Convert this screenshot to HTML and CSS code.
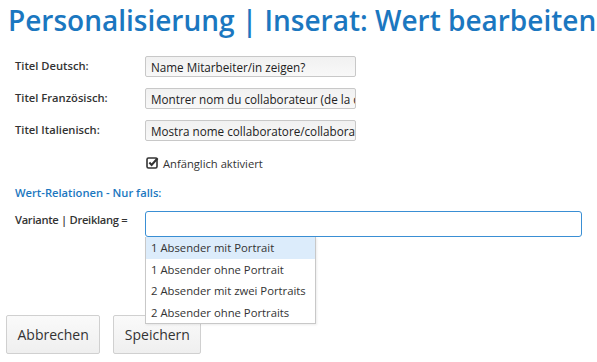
FILE: index.html
```html
<!DOCTYPE html>
<html lang="de">
<head>
<meta charset="utf-8">
<title>Personalisierung</title>
<link rel="stylesheet" href="styles.css">
</head>
<body>
<h1 class="title">Personalisierung | Inserat: Wert bearbeiten</h1>
<form class="form">
  <div class="row">
    <label class="label">Titel Deutsch:</label>
    <input class="text" type="text" value="Name Mitarbeiter/in zeigen?">
  </div>
  <div class="row">
    <label class="label">Titel Französisch:</label>
    <input class="text" type="text" value="Montrer nom du collaborateur (de la collaboratrice)?">
  </div>
  <div class="row">
    <label class="label">Titel Italienisch:</label>
    <input class="text" type="text" value="Mostra nome collaboratore/collaboratrice?">
  </div>
  <div class="row check-row">
    <span class="check-box">
      <svg width="13" height="13" viewBox="0 0 13 13">
        <rect x="1" y="2" width="10" height="10" rx="1.5" fill="none" stroke="#333" stroke-width="1.6"/>
        <path d="M3.4 6.6 L5.6 8.9 L11.6 2.2" fill="none" stroke="#333" stroke-width="2.1"/>
      </svg>
    </span>
    <span class="check-text">Anfänglich aktiviert</span>
  </div>
  <div class="section">Wert-Relationen - Nur falls:</div>
  <div class="row relation-row">
    <label class="label rel-label">Variante | Dreiklang =</label>
    <div class="combo">
      <input class="text wide" type="text" value="">
      <ul class="menu">
        <li class="item active">1 Absender mit Portrait</li>
        <li class="item">1 Absender ohne Portrait</li>
        <li class="item">2 Absender mit zwei Portraits</li>
        <li class="item">2 Absender ohne Portraits</li>
      </ul>
    </div>
  </div>
  <div class="buttons">
    <button type="button" class="btn">Abbrechen</button>
    <button type="button" class="btn">Speichern</button>
  </div>
</form>
</body>
</html>
```
FILE: styles.css
```css
html, body {
  margin: 0;
  padding: 0;
  background: #fff;
}
body {
  font-family: "Open Sans", "DejaVu Sans", sans-serif;
  color: #333;
  width: 597px;
  height: 362px;
  overflow: hidden;
}
.title {
  margin: 0;
  padding: 0 0 0 8px;
  font-size: 28px;
  line-height: 40px;
  font-weight: 600;
  color: #1b77c0;
  white-space: nowrap;
}
.form {
  padding: 16px 0 0 15px;
}
.row {
  display: grid;
  grid-template-columns: 130px auto;
  align-items: start;
  margin-bottom: 11px;
}
.label {
  font-size: 11.2px;
  font-weight: 600;
  line-height: 20px;
  color: #333;
}
.rel-label {
  letter-spacing: -0.3px;
}
.text {
  box-sizing: border-box;
  width: 211px;
  height: 21px;
  margin: 0;
  padding: 0 0 0 5px;
  border: 1px solid #c8c8c8;
  border-radius: 2px;
  background: linear-gradient(#f1f1f1, #f8f8f8);
  font-family: inherit;
  font-size: 11.7px;
  color: #222;
  outline: none;
}
.check-row {
  display: flex;
  align-items: center;
  padding-left: 131px;
  margin-top: 2px;
  margin-bottom: 0;
  height: 22px;
}
.check-box {
  display: inline-flex;
  width: 14px;
  height: 14px;
  margin-right: 3px;
}
.check-text {
  font-size: 11.2px;
}
.section {
  margin-top: 10px;
  font-size: 11.2px;
  line-height: 18px;
  font-weight: 600;
  color: #1b77c0;
}
.relation-row {
  margin-top: 9px;
  margin-bottom: 0;
}
.relation-row .label {
  line-height: 18px;
}
.combo {
  position: relative;
}
.text.wide {
  width: 437px;
  height: 26px;
  border: 1px solid #3a8fd4;
  border-radius: 3px;
  background: #fff;
}
.menu {
  position: absolute;
  left: 0;
  top: 26px;
  box-sizing: border-box;
  width: 171px;
  margin: 0;
  padding: 0;
  list-style: none;
  background: #fff;
  border: 1px solid #c8c8c8;
  border-top: 0;
  box-shadow: 1px 1px 2px rgba(0,0,0,0.08);
  z-index: 2;
}
.item {
  font-size: 11.3px;
  line-height: 21.5px;
  height: 21.5px;
  padding-left: 5px;
  color: #333;
  white-space: nowrap;
}
.item.active {
  background: #dcecfb;
}
.buttons {
  display: flex;
  gap: 13px;
  margin-top: 78px;
  margin-left: -9px;
}
.btn {
  height: 39px;
  padding: 0 10.5px;
  border: 1px solid #d0d0d0;
  border-radius: 2px;
  background: linear-gradient(#fafafa, #efefef);
  font-family: inherit;
  font-size: 14px;
  color: #333;
}
```
